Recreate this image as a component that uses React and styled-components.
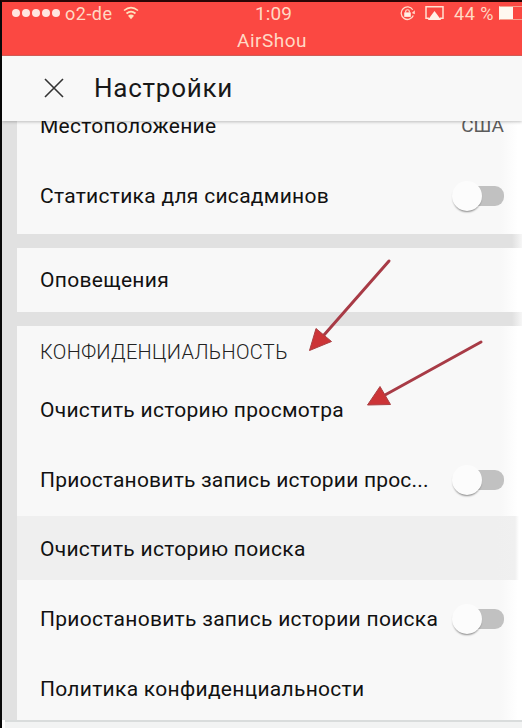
import styled, { createGlobalStyle } from "styled-components";

const GlobalStyle = createGlobalStyle`
  * {
    box-sizing: border-box;
  }

  body {
    margin: 0;
    background: #fff;
    font-family: Roboto, "Liberation Sans", sans-serif;
  }
`;

const Screen = styled.div`
  position: relative;
  display: flex;
  flex-direction: column;
  width: 522px;
  height: 728px;
  overflow: hidden;
  border-top: 2px solid #2a0505;
  border-left: 2px solid #080808;
  background: #fff;
`;

const StatusBar = styled.div`
  flex: none;
  height: 54px;
  background: #fb4842;
  border-bottom: 1px solid #d9605a;
  color: #ffd9c4;
`;

const StatusRow = styled.div`
  display: grid;
  grid-template-columns: 253px 1fr auto;
  align-items: center;
  height: 23px;
`;

const StatusGroup = styled.div`
  display: flex;
  align-items: center;
`;

const Dots = styled.div`
  display: flex;
  gap: 2px;
  margin: 0 5px 2px 10px;
`;

const Dot = styled.span`
  width: 8px;
  height: 8px;
  border-radius: 50%;
  background: #ffe6e0;
`;

const StatusText = styled.span`
  font-size: ${(props) => props.$size || 18}px;
  line-height: 22px;
  letter-spacing: ${(props) => props.$spacing || 0}px;
  white-space: pre;
`;

const WifiIcon = styled.svg`
  width: 16px;
  height: 14px;
  margin: 0 0 2px 10px;
`;

const LockIcon = styled.svg`
  width: 15px;
  height: 15px;
  margin: 0 10px 1px 0;
`;

const AirplayIcon = styled.svg`
  width: 19px;
  height: 16px;
  margin: 0 10px 1px 0;
`;

const Battery = styled.span`
  width: 23px;
  height: 14px;
  margin: 0 0 1px 5px;
  border: 1px solid #f5a08f;
  border-left-color: #fff4ea;
  border-right: 0;
  background: linear-gradient(to right, #fff8f0 13px, transparent 13px);
`;

const AppName = styled.div`
  padding-left: 235px;
  font-size: 19px;
  line-height: 32px;
  letter-spacing: 0.5px;
`;

const Header = styled.header`
  position: relative;
  z-index: 1;
  flex: none;
  display: flex;
  align-items: center;
  height: 65px;
  padding: 0 0 2px 42px;
  background: #f8f8f8;
  box-shadow: 0 1px 3px rgba(0, 0, 0, 0.24);
`;

const CloseIcon = styled.svg`
  width: 20px;
  height: 20px;
`;

const Title = styled.h1`
  margin: 0 0 0 30px;
  font-size: 26px;
  font-weight: 400;
  line-height: 34px;
  letter-spacing: 0.75px;
  color: #181818;
`;

const Content = styled.main`
  flex: 1;
  display: flex;
  flex-direction: column;
  gap: 14px;
  padding-left: 15px;
  background: linear-gradient(to right, #e1e1e1 510px, #f6f6f6 520px);
`;

const Card = styled.section`
  flex: none;
  height: ${(props) => props.$height}px;
  background: linear-gradient(to right, #f8f8f8 484px, #fff 501px);
`;

const Row = styled.div`
  display: flex;
  align-items: center;
  justify-content: space-between;
  height: ${(props) => props.$height || 69.7}px;
  padding: 0 18px 0 23px;
`;

const PressedRow = styled(Row)`
  background: linear-gradient(
    to right,
    #efefef 480px,
    #f0f0f0 498px,
    #fff 502px
  );
  height: 64px;
  margin: 2px 0 4px;
  padding-top: 2px;
`;

const Label = styled.span`
  font-size: 21px;
  line-height: 28px;
  letter-spacing: ${(props) => props.$spacing ?? 0.29}px;
  white-space: nowrap;
  color: #111;
`;

const Value = styled(Label)`
  font-size: 19px;
  letter-spacing: 0;
  color: #5c5c5c;
`;

const SectionTitle = styled.h2`
  margin: 0;
  padding: 12px 0 9px 23px;
  font-size: 20px;
  font-weight: 300;
  line-height: 28px;
  letter-spacing: 0.33px;
  color: #222;
`;

const Track = styled.span`
  position: relative;
  flex: none;
  width: 48px;
  height: 20px;
  border-radius: 9px;
  background: linear-gradient(to right, transparent 18px, #c1c1c1 18px);
`;

const Knob = styled.span`
  position: absolute;
  top: -5px;
  left: -4px;
  width: 30px;
  height: 30px;
  border-radius: 50%;
  background: #fcfcfc;
  box-shadow: 0 2px 2px -1px rgba(0, 0, 0, 0.45);
`;

const BottomEdge = styled.div`
  flex: none;
  height: 8px;
  margin-left: 3px;
  border-top: 2px solid #d9dcdc;
  background: #f2f3f3;
`;

const Arrows = styled.svg`
  position: absolute;
  z-index: 2;
  top: -2px;
  left: -2px;
  pointer-events: none;
`;

function Switch() {
  return (
    <Track>
      <Knob />
    </Track>
  );
}

function SettingRow({ label, spacing, height, children }) {
  return (
    <Row $height={height}>
      <Label $spacing={spacing}>{label}</Label>
      {children}
    </Row>
  );
}

function App() {
  return (
    <>
      <GlobalStyle />
      <Screen>
        <StatusBar>
          <StatusRow>
            <StatusGroup>
              <Dots>
                {[1, 2, 3, 4, 5].map((dot) => (
                  <Dot key={dot} />
                ))}
              </Dots>
              <StatusText $spacing={0.5}>o2-de</StatusText>
              <WifiIcon viewBox="0 0 16 14" fill="none" stroke="#ffe2bd">
                <path d="M1 4.5Q8 -1.2 15 4.5" strokeWidth="1.6" />
                <path d="M3.5 7.5Q8 3.8 12.5 7.5" strokeWidth="1.8" />
                <path d="M5 9.8Q8 7.2 11 9.8L8 13.3Z" fill="#ffe2bd" stroke="none" />
              </WifiIcon>
            </StatusGroup>
            <StatusText $spacing={0.1} $size={19}>1:09</StatusText>
            <StatusGroup>
              <LockIcon viewBox="0 0 16 16" fill="none" stroke="#ffdccb">
                <path d="M13.6 4A6.7 6.7 0 1 0 14.2 10.2" strokeWidth="1.4" />
                <path d="M15.8 4.4V8.8L12.6 7.4Z" fill="#ffdccb" stroke="none" />
                <rect x="4.5" y="6.8" width="7" height="4.8" fill="#fff0e6" stroke="none" />
                <path d="M6 7.2V6a2 2 0 0 1 4 0V7.2" strokeWidth="1.3" />
              </LockIcon>
              <AirplayIcon viewBox="0 0 19 16">
                <path d="M4 13.2H1V1.7H18V13.2H15" fill="none" stroke="#ffe0d2" strokeWidth="1.5" />
                <path d="M9.5 6L16.2 15H2.8Z" fill="#fff0e6" />
              </AirplayIcon>
              <StatusText $spacing={0.5}>44 %</StatusText>
              <Battery />
            </StatusGroup>
          </StatusRow>
          <AppName>AirShou</AppName>
        </StatusBar>

        <Header>
          <CloseIcon viewBox="0 0 20 20" stroke="#333" strokeWidth="1.6">
            <path d="M1 1L19 19M19 1L1 19" />
          </CloseIcon>
          <Title>Настройки</Title>
        </Header>

        <Content>
          <Card $height={113}>
            <SettingRow label="Местоположение" height={10}>
              <Value>США</Value>
            </SettingRow>
            <SettingRow label="Статистика для сисадминов" height={130}>
              <Switch />
            </SettingRow>
          </Card>

          <Card $height={64}>
            <SettingRow label="Оповещения" height={64} />
          </Card>

          <Card $height={394}>
            <SectionTitle>КОНФИДЕНЦИАЛЬНОСТЬ</SectionTitle>
            <SettingRow label="Очистить историю просмотра" />
            <SettingRow label="Приостановить запись истории прос..." spacing={0.2}>
              <Switch />
            </SettingRow>
            <PressedRow>
              <Label>Очистить историю поиска</Label>
            </PressedRow>
            <SettingRow label="Приостановить запись истории поиска">
              <Switch />
            </SettingRow>
            <SettingRow label="Политика конфиденциальности" />
          </Card>
        </Content>
        <BottomEdge />

        <Arrows width="522" height="728" viewBox="0 0 522 728">
          <g stroke="#a83b46" strokeWidth="3" strokeLinecap="round">
            <path d="M389 261L324 335" />
            <path d="M481 342L385 395" />
          </g>
          <g fill="#cc3437" stroke="#a94043" strokeWidth="1">
            <path d="M309.5 350.5L316 328.5L331.5 341.5Z" />
            <path d="M367.5 405L380 386.5L390.5 404.5Z" />
          </g>
        </Arrows>
      </Screen>
    </>
  );
}

export default App;
